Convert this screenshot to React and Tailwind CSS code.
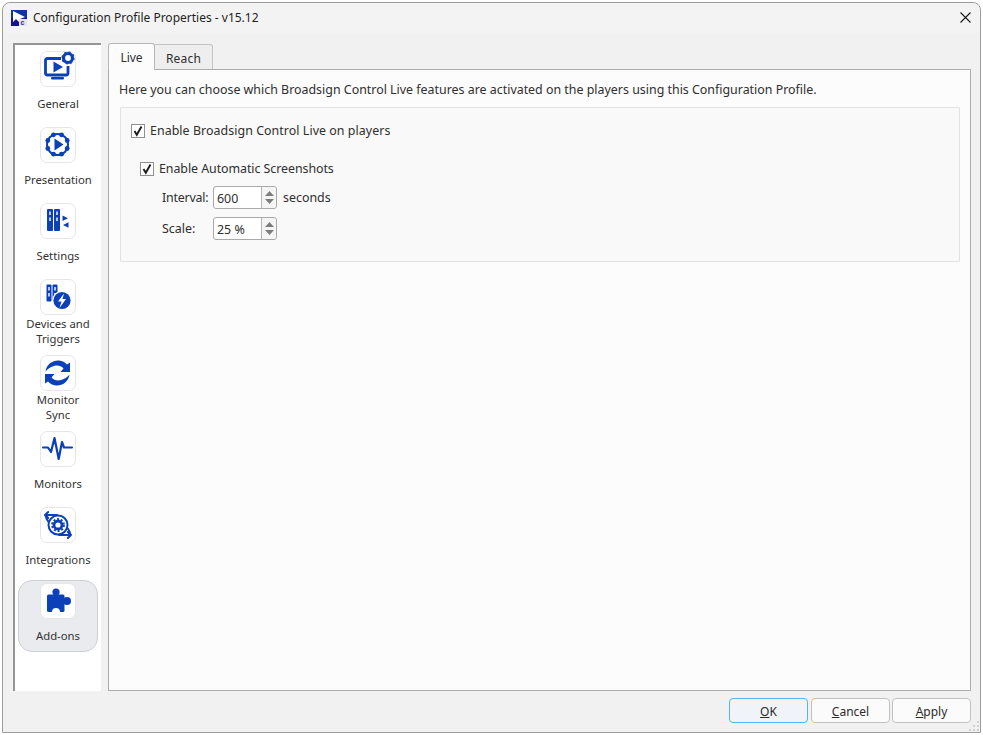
import React from "react";

const BLUE = "#0b40b8";

const GeneralIcon = () => (
  <svg width="36" height="36" viewBox="0 0 36 36">
    <path d="M21 7.500H7.500A2 2 0 0 0 5.500 9.500v12.500a2 2 0 0 0 2 2h18.500a2 2 0 0 0 2-2v-7" fill="none" stroke={BLUE} strokeWidth="2.800" />
    <path d="M13.500 10.500l9.500 5.500-9.500 5.500z" fill={BLUE} />
    <rect x="11" y="26" width="13" height="2.600" rx="1" fill={BLUE} />
    <circle cx="28" cy="7" r="4.500" fill="none" stroke={BLUE} strokeWidth="3.200" />
    <circle cx="28" cy="7" r="6" fill="none" stroke={BLUE} strokeWidth="1.200" strokeDasharray="2.200 2.500" />
  </svg>
);

const PresentationIcon = () => {
  const pts = [0, 45, 90, 135, 180, 225, 270, 315].map((a) => {
    const r = ((a + 22.5) * Math.PI) / 180;
    return [17.500 + 10.500 * Math.cos(r), 17.500 + 10.500 * Math.sin(r)];
  });
  return (
    <svg width="36" height="36" viewBox="0 0 36 36">
      <circle cx="17.500" cy="17.500" r="10.500" fill="none" stroke={BLUE} strokeWidth="2" />
      {pts.map(([x, y], i) => (
        <circle key={i} cx={x} cy={y} r="2.400" fill={BLUE} />
      ))}
      <path d="M14.500 11.500l9 6-9 6z" fill={BLUE} />
    </svg>
  );
};

const Rack = ({ x, y = 6, w = 6, h = 22 }) => (
  <g>
    <rect x={x} y={y} width={w} height={h} rx="1" fill={BLUE} />
    <rect x={x + w / 2 - 0.7} y={y + 2.500} width="1.400" height="3.500" fill="#fff" />
    <rect x={x + w / 2 - 0.7} y={y + 8.500} width="1.400" height="3.500" fill="#fff" />
  </g>
);

const SettingsIcon = () => (
  <svg width="36" height="36" viewBox="0 0 36 36">
    <Rack x={7} />
    <Rack x={14} />
    <path d="M22.500 12.500l5.500 2.700-5.500 2.800zM28.500 19.300l-5.500 2.700 5.500 2.800z" fill={BLUE} />
  </svg>
);

const DevicesIcon = () => (
  <svg width="36" height="36" viewBox="0 0 36 36">
    <Rack x={6.500} y={5.500} w={5} h={17} />
    <Rack x={12.500} y={5.500} w={5} h={17} />
    <circle cx="22" cy="21.500" r="9.800" fill="#fff" />
    <circle cx="22" cy="21.500" r="8.600" fill={BLUE} />
    <path d="M24 14.500l-6 8h3.500l-2 6.500 6.500-9h-3.500z" fill="#fff" />
  </svg>
);

const SWOOSH = "M5.500 16.500C6.500 9 13 5 19 5.500c3.500.3 6 1.800 8 4L30 7.500V17h-9.500l3-3.500C21 10.500 17 10 14 11 10 12 7.500 14 5.500 16.500z";

const SyncIcon = () => (
  <svg width="36" height="36" viewBox="0 0 36 36">
    <path d={SWOOSH} fill={BLUE} />
    <path d={SWOOSH} fill={BLUE} transform="rotate(180 17.500 18)" />
  </svg>
);

const PulseIcon = () => (
  <svg width="36" height="36" viewBox="0 0 36 36">
    <path d="M3 16.500H8L11 21l3.500-14 4.200 21L22 11l2 5.500H32" fill="none" stroke={BLUE} strokeWidth="2.200" strokeLinejoin="round" strokeLinecap="round" />
  </svg>
);

const IntegrationsIcon = () => (
  <svg width="36" height="36" viewBox="0 0 36 36">
    <circle cx="18" cy="18" r="9.500" fill="none" stroke={BLUE} strokeWidth="2" />
    <circle cx="18" cy="18" r="4" fill="none" stroke={BLUE} strokeWidth="2.800" />
    <circle cx="18" cy="18" r="6" fill="none" stroke={BLUE} strokeWidth="1.800" strokeDasharray="2 1.800" />
    <path d="M17 8H5M5 8l3.200-3M5 8l3.200 3M19 28h12M31 28l-3.200-3M31 28l-3.200 3" fill="none" stroke={BLUE} strokeWidth="2" strokeLinecap="round" />
    <path d="M5.500 8c.5 3 1.500 5 3 7M30.500 28c-.5-3-1.500-5-3-7" fill="none" stroke={BLUE} strokeWidth="2" />
  </svg>
);

const PuzzleIcon = () => (
  <svg width="36" height="36" viewBox="0 0 36 36">
    <rect x="7" y="11.500" width="17.500" height="17.500" rx="1.500" fill={BLUE} />
    <circle cx="16" cy="9" r="3.600" fill={BLUE} />
    <rect x="14" y="9" width="4" height="4" fill={BLUE} />
    <circle cx="27" cy="18" r="4" fill={BLUE} />
    <rect x="23" y="16" width="3" height="4" fill={BLUE} />
    <circle cx="16" cy="29" r="4" fill="#fff" />
    <rect x="7" y="29" width="18" height="2" fill="#fff" />
  </svg>
);

const NavItem = ({ icon, label, active }) => (
  <div
    className={
      "h-[72px] flex flex-col items-center pt-[2px] rounded-[14px] border " +
      (active ? "bg-[#e9ebef] border-[#cdcfd3]" : "border-transparent")
    }
  >
    <div className="w-[36px] h-[36px] shrink-0 bg-white rounded-[7px] border border-[#e6e6e6] flex items-center justify-center">
      <div className="shrink-0 w-[36px] h-[36px]">{icon}</div>
    </div>
    <div className="min-h-[32px] flex items-center justify-center text-center leading-[15px] text-[#333333] text-[11.3px]">
      {label}
    </div>
  </div>
);

const Check = ({ label, className = "" }) => (
  <div className={"flex items-center gap-[5px] leading-[17px] " + className}>
    <div className="w-[14px] h-[14px] bg-white border border-[#8f8f8f] flex items-center justify-center">
      <svg width="12" height="12" viewBox="0 0 12 12">
        <path d="M2.500 6l2.300 3.800L9.500 1.500" fill="none" stroke="#1c1c1c" strokeWidth="1.900" />
      </svg>
    </div>
    <span>{label}</span>
  </div>
);

const Spin = ({ value }) => (
  <div className="w-[64px] h-[23px] bg-white rounded-[3px] border border-[#a9a9a9] flex">
    <div className="flex-1 pl-[3px] pt-[1px] leading-[21px]">{value}</div>
    <div className="w-[15px] border-l border-[#b5b5b5] flex flex-col items-center justify-center gap-[3px] bg-[#f5f5f5] rounded-r-[3px]">
      <svg width="9" height="5" viewBox="0 0 9 5"><path d="M4.500 0L9 5H0z" fill="#7d7d7d" /></svg>
      <svg width="9" height="5" viewBox="0 0 9 5"><path d="M4.500 5L9 0H0z" fill="#7d7d7d" /></svg>
    </div>
  </div>
);

const Btn = ({ u, rest, primary, className = "" }) => (
  <div
    className={
      "w-[79px] h-[25px] rounded-[4px] flex items-center justify-center pt-[2px] border text-[12px] text-[#2b2b2b] " +
      className + " " +
      (primary ? "border-[#58b2ee] bg-[#f0f4f8]" : "border-[#c2c2c2] bg-[#fbfbfb]")
    }
  >
    <span><span className="underline">{u}</span>{rest}</span>
  </div>
);

const GRIP = [[8, 0], [4, 4], [8, 4], [0, 8], [4, 8], [8, 8]];

export default function App() {
  return (
    <div
      className="w-[983px] h-[735px] bg-white p-[2px] overflow-hidden text-[12.42px] text-[#2f2f2f]"
      style={{ fontFamily: '"Noto Sans", "Open Sans", sans-serif' }}
    >
      <div className="relative w-[979px] h-[731px] bg-[#f1f1f1] border border-[#9c9c9c] rounded-t-[8px] flex flex-col">
        <div className="h-[30px] shrink-0 flex items-center bg-[#f3f3f3] rounded-t-[8px] pl-[8px] pr-[9px]">
          <svg width="16" height="16" viewBox="0 0 16 16" className="shrink-0">
            <rect width="16" height="16" fill="#14148c" />
            <rect width="16" height="8" fill="#0d3fa8" opacity="0.8" />
            <path d="M2 1l12 6-5 2-1 3-3-3-3 3z" fill="#fff" />
            <rect x="8" y="9" width="8" height="7" fill="#e4e4f2" />
            <text x="9.500" y="15" fontSize="7" fontWeight="700" fill="#3a1a9a" fontFamily="Liberation Sans">c</text>
          </svg>
          <span className="ml-[6px] text-[12px] text-[#1f1f1f]">Configuration Profile Properties - v15.12</span>
          <svg width="11" height="11" viewBox="0 0 11 11" className="ml-auto -mt-[2px]">
            <path d="M.5.500l10 10M10.500.500l-10 10" stroke="#1a1a1a" strokeWidth="1.100" />
          </svg>
        </div>

        <div className="flex-1 flex px-[10px] pt-[10px] min-h-0">
          <div className="w-[88px] h-[648px] bg-white border-l-2 border-t-2 border-[#959595] pl-[3px] pr-[3px] pt-[3px] flex flex-col gap-[4px] shrink-0">
            <NavItem icon={<GeneralIcon />} label="General" />
            <NavItem icon={<PresentationIcon />} label="Presentation" />
            <NavItem icon={<SettingsIcon />} label="Settings" />
            <NavItem icon={<DevicesIcon />} label={<>Devices and<br />Triggers</>} />
            <NavItem icon={<SyncIcon />} label={<>Monitor<br />Sync</>} />
            <NavItem icon={<PulseIcon />} label="Monitors" />
            <NavItem icon={<IntegrationsIcon />} label="Integrations" />
            <NavItem icon={<PuzzleIcon />} label="Add-ons" active />
          </div>

          <div className="ml-[7px] flex-1 flex flex-col -mt-[1px]">
            <div className="h-[27px] flex items-end shrink-0 text-[12px]">
              <div className="w-[47px] h-[27px] bg-[#fcfcfc] border border-b-0 border-[#b8b8b8] rounded-t-[3px] flex items-center justify-center relative z-10 -mb-px pt-[1px]">Live</div>
              <div className="w-[58px] h-[25px] bg-[#eeeeee] border border-b-0 border-l-0 border-[#c4c4c4] rounded-tr-[3px] flex items-center justify-center pt-[4px] tracking-[0.2px]">Reach</div>
            </div>
            <div className="h-[622px] w-[863px] bg-[#fcfcfc] border border-[#acacac] px-[10px] pt-[11px]">
              <div className="leading-[17px]">Here you can choose which Broadsign Control Live features are activated on the players using this Configuration Profile.</div>
              <div className="ml-[1px] mt-[9px] h-[155px] border border-[#e2e2e2] bg-[#f9f9f9] rounded-[1px] pl-[10px] pt-[14px]">
                <Check label="Enable Broadsign Control Live on players" className="tracking-[0.05px]" />
                <div className="ml-[9px] mt-[21px]">
                  <Check label="Enable Automatic Screenshots" className="tracking-[-0.06px]" />
                  <div className="flex items-center mt-[9px] ml-[22px]">
                    <span className="w-[51px] pt-[1px] tracking-[-0.2px]">Interval:</span>
                    <Spin value="600" />
                    <span className="ml-[6px] pt-[1px]">seconds</span>
                  </div>
                  <div className="flex items-center mt-[8px] ml-[22px]">
                    <span className="w-[51px] pt-[1px]">Scale:</span>
                    <Spin value="25 %" />
                  </div>
                </div>
              </div>
            </div>
          </div>
        </div>

        <div className="h-[41px] shrink-0 flex justify-end items-start pt-[7px] pr-[9px] gap-[2px]">
          <Btn u="O" rest="K" primary className="mr-[1px]" />
          <Btn u="C" rest="ancel" />
          <Btn u="A" rest="pply" />
        </div>

        <div className="absolute right-[1px] bottom-[1px] w-[10px] h-[10px]">
          <svg width="10" height="10" viewBox="0 0 10 10">
            {GRIP.map(([x, y], i) => (
              <rect key={i} x={x} y={y} width="2" height="2" fill="#d0d0d0" />
            ))}
          </svg>
        </div>
      </div>
    </div>
  );
}
